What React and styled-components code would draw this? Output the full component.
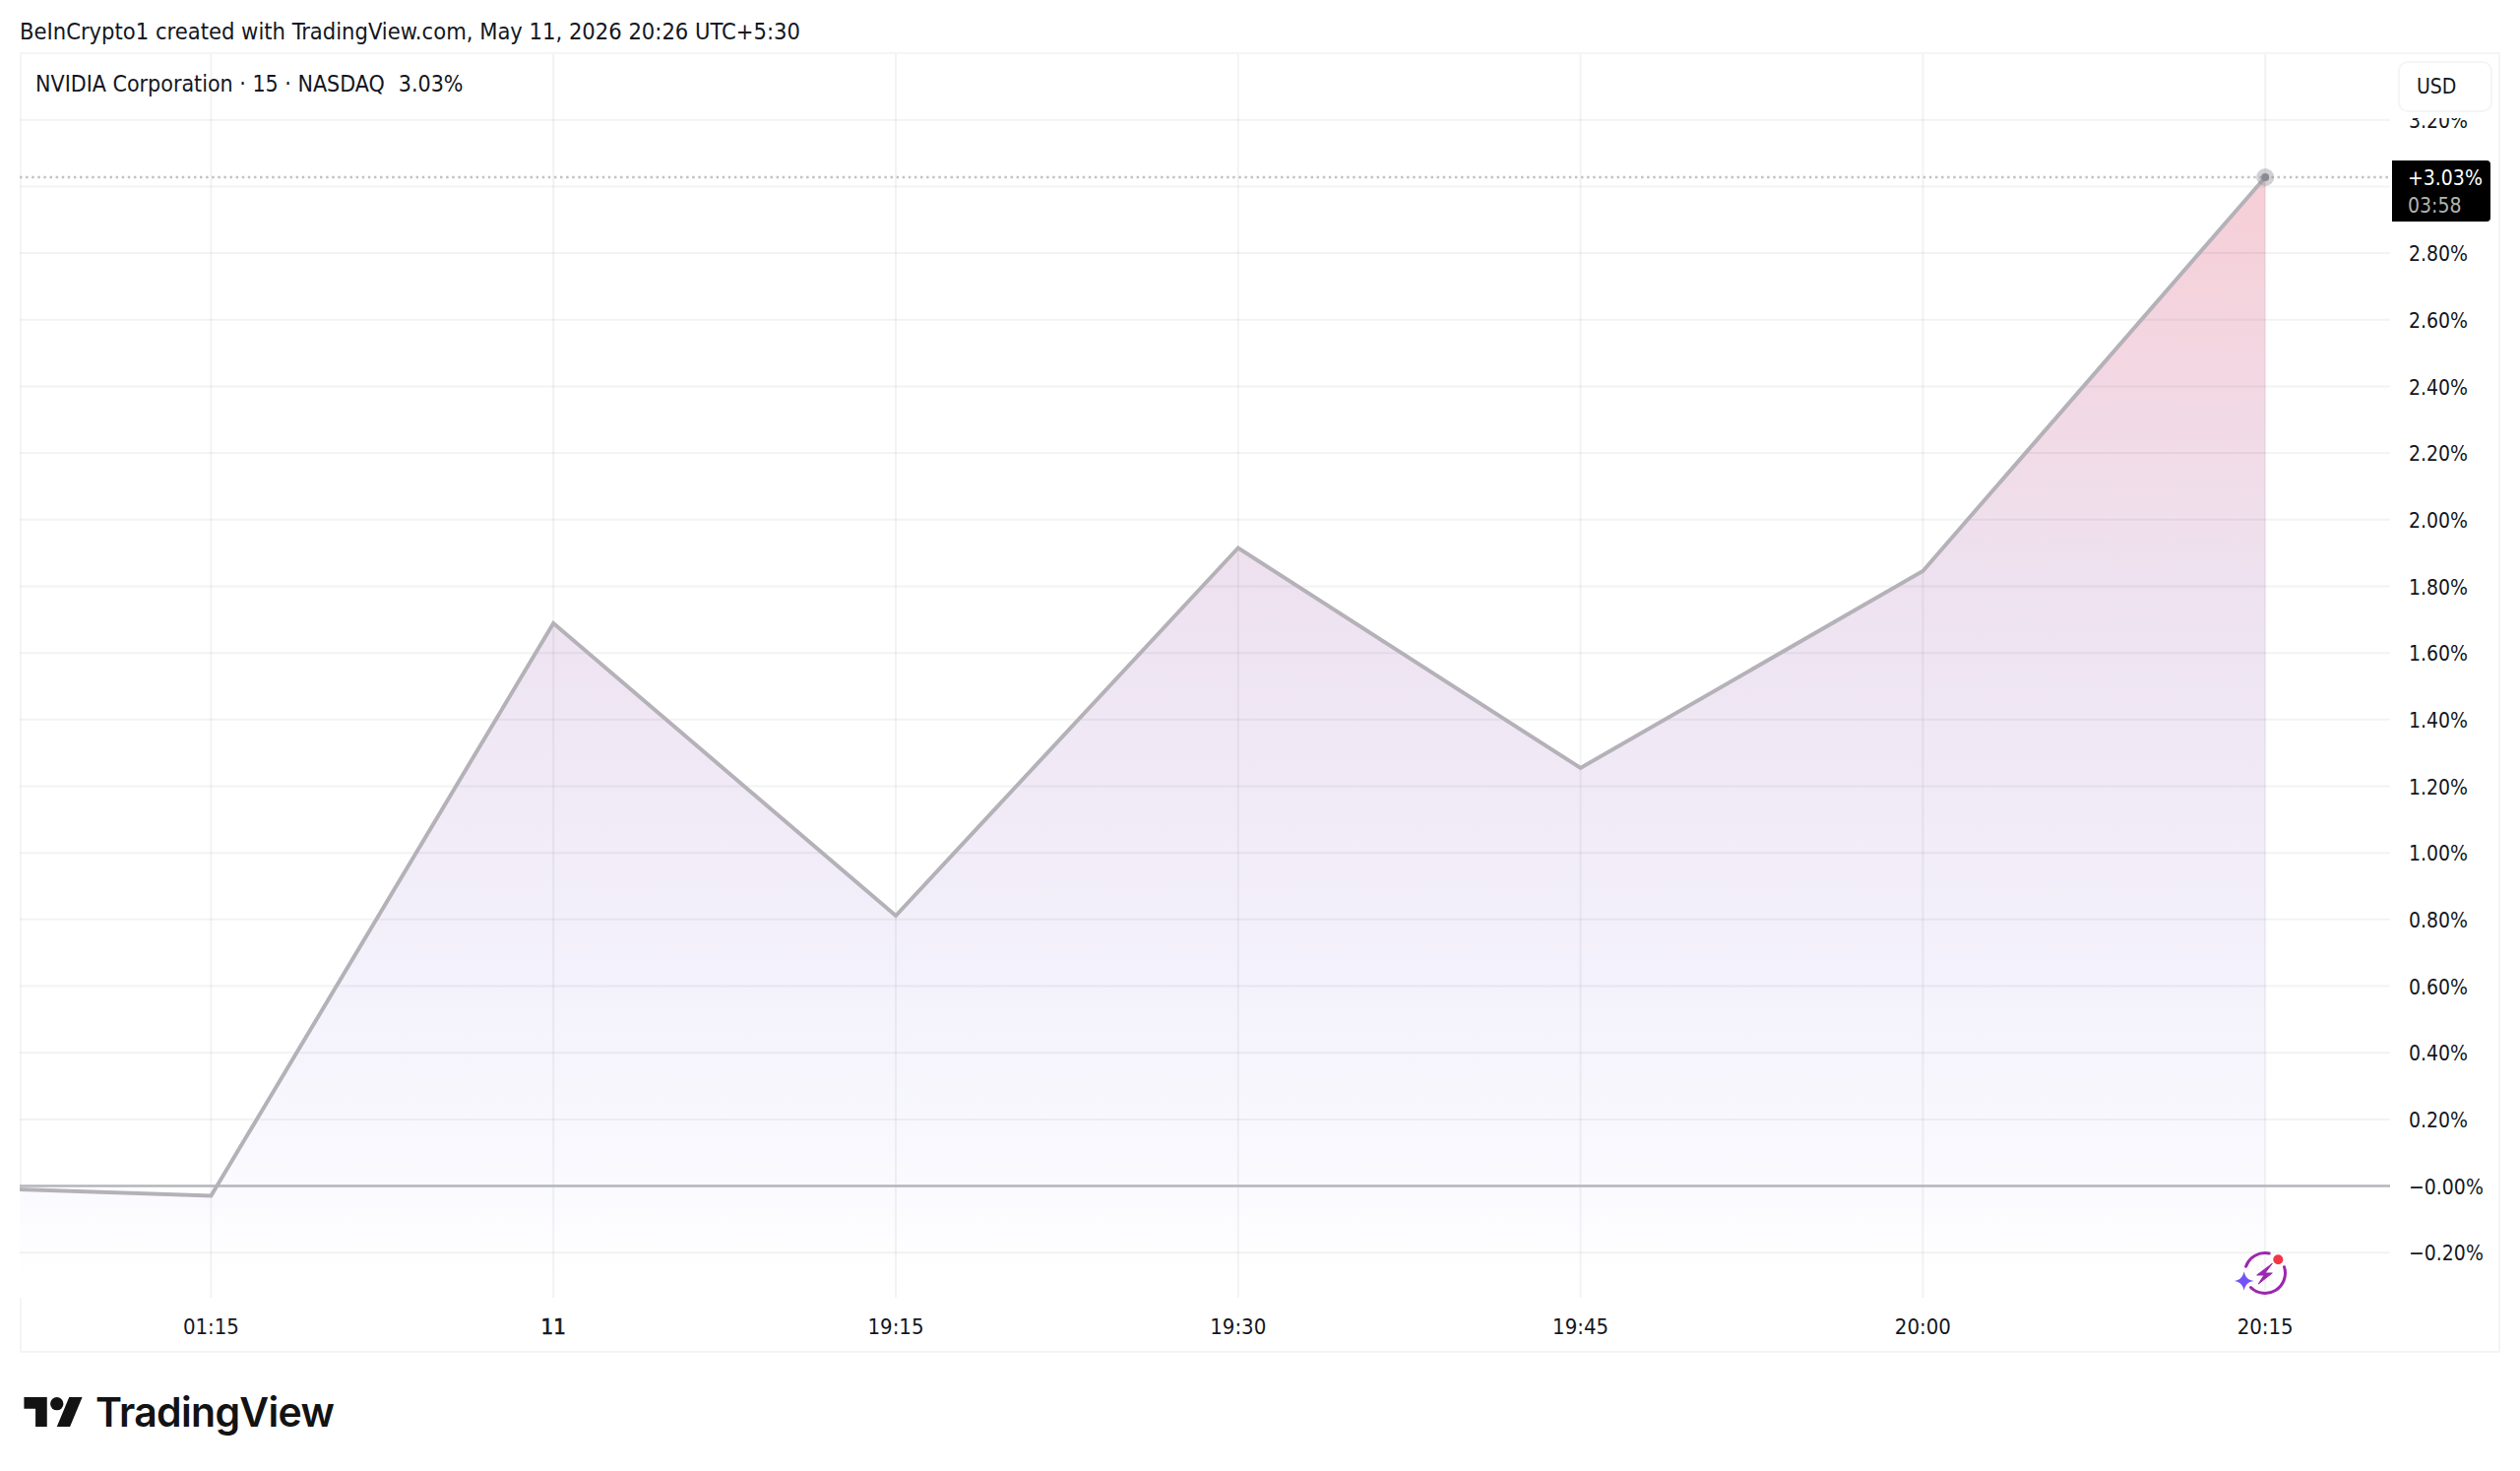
import styled, { createGlobalStyle } from "styled-components"

const GlobalStyle = createGlobalStyle`
    html, body {
        margin: 0;
        background: #fff;
    }
    body {
        font-family: "DejaVu Sans Condensed", "DejaVu Sans", sans-serif;
        font-stretch: condensed;
        color: #131722;
    }
`

const Page = styled.div`
    width: 2560px;
    height: 1494px;
    padding: 0 20px;
    box-sizing: border-box;
    overflow: hidden;
`

const Caption = styled.div`
    height: 53px;
    padding-top: 18px;
    box-sizing: border-box;
    font-size: 23.5px;
    line-height: 28px;
    white-space: nowrap;
`

const Frame = styled.div`
    position: relative;
    display: grid;
    grid-template-columns: 2406px 110px;
    grid-template-rows: 1263px 54px;
    border: 2px solid #f5f5f6;
`

const Plot = styled.div`
    margin-left: -2px;
    overflow: hidden;

    svg {
        display: block;
    }
`

const PriceAxis = styled.div`
    display: flex;
    flex-direction: column;
    padding: 34px 0 0 19px;
    overflow: hidden;
`

const PriceTick = styled.div`
    flex: 0 0 67.68px;
    display: flex;
    align-items: center;
    font-size: 21px;
    white-space: nowrap;
`

const TimeAxis = styled.div`
    display: flex;
    padding: 4px 0 0 18.5px;
`

const TimeTick = styled.div`
    flex: 0 0 347.8px;
    display: flex;
    align-items: center;
    justify-content: center;
    font-size: 22px;
    -webkit-text-stroke: ${(p) => (p.$strong ? "0.6px" : "0")};
`

const Legend = styled.div`
    position: absolute;
    left: 14px;
    top: 16px;
    font-size: 23px;
    line-height: 28px;
    white-space: nowrap;

    span {
        margin-left: 14px;
    }
`

const CurrencyButton = styled.div`
    position: absolute;
    right: 6px;
    top: 7px;
    width: 96px;
    height: 52px;
    box-sizing: border-box;
    display: flex;
    align-items: center;
    padding-left: 17px;
    font-size: 21px;
    background: #fff;
    border: 2px solid #f5f5f6;
    border-radius: 10px;
    box-shadow: 0 0 0 6px #fff;
`

const PriceBadge = styled.div`
    position: absolute;
    right: 8px;
    top: 108px;
    width: 100px;
    height: 62px;
    box-sizing: border-box;
    padding: 4px 0 0 16px;
    background: #000;
    color: #fff;
    border-radius: 0 4px 4px 0;
    font-size: 21px;
    line-height: 28px;
`

const Countdown = styled.div`
    color: #b2b2b2;
`

const SparkIcon = styled.svg`
    position: absolute;
    left: 2246px;
    top: 1210px;
`

const Footer = styled.div`
    display: flex;
    align-items: center;
    gap: 13px;
    margin: 35px 0 0 4px;
`

const Wordmark = styled.div`
    font-family: Inter, "Liberation Sans", sans-serif;
    font-stretch: normal;
    font-size: 41px;
    line-height: 50px;
    font-weight: 600;
    letter-spacing: -0.7px;
    color: #131313;
`

// the 3.00% tick sits under the last-price badge, so it stays empty
const priceTicks = [
    "3.20%", "", "2.80%", "2.60%", "2.40%", "2.20%", "2.00%", "1.80%", "1.60%",
    "1.40%", "1.20%", "1.00%", "0.80%", "0.60%", "0.40%", "0.20%", "−0.00%", "−0.20%",
]
const timeTicks = ["01:15", "11", "19:15", "19:30", "19:45", "20:00", "20:15"]

const gridY = priceTicks.map((_, i) => 121.7 + i * 67.68)
const gridX = timeTicks.map((_, i) => 214.4 + i * 347.8)
const points = [
    [20, 1208], [214.4, 1214.5], [562.2, 633], [910, 930], [1257.8, 556.5],
    [1605.6, 780], [1953.4, 580], [2301.2, 180],
]
const linePath = points.map((p) => p.join(",")).join(" ")
const areaPath = `${linePath} 2301.2,1318 20,1318`

const Chart = () => (
    <svg width="2408" height="1263" viewBox="20 55 2408 1263">
        <defs>
            <linearGradient id="area" gradientUnits="userSpaceOnUse" x1="0" y1="180" x2="0" y2="1318">
                <stop offset="0" stopColor="#f6ced6" />
                <stop offset="0.37" stopColor="#eee2f0" />
                <stop offset="0.7" stopColor="#f3f1fb" />
                <stop offset="0.9" stopColor="#fafaff" />
                <stop offset="0.96" stopColor="#fefeff" />
                <stop offset="1" stopColor="#ffffff" />
            </linearGradient>
        </defs>
        <polygon points={areaPath} fill="url(#area)" />
        {gridY.map((y) => (
            <line key={y} x1="20" x2="2428" y1={y} y2={y} stroke="#2a2e39" strokeOpacity="0.06" strokeWidth="2" />
        ))}
        {gridX.map((x) => (
            <line key={x} x1={x} x2={x} y1="55" y2="1318" stroke="#2a2e39" strokeOpacity="0.06" strokeWidth="2" />
        ))}
        <line x1="20" x2="2428" y1="1204.5" y2="1204.5" stroke="#b4b6bc" strokeWidth="2.5" />
        <line x1="20" x2="2428" y1="180" y2="180" stroke="#c3c3c7" strokeWidth="2.5" strokeDasharray="2.5 3.6" />
        <polyline points={linePath} fill="none" stroke="#b5b1b8" strokeWidth="4" strokeLinejoin="miter" />
        <circle cx="2301.2" cy="180" r="9" fill="#8b8b92" fillOpacity="0.4" />
        <circle cx="2301.2" cy="180" r="4" fill="#8b8b92" />
    </svg>
)

const Spark = () => (
    <SparkIcon width="60" height="56" viewBox="0 0 60 56" fill="none">
        <path d="M13.6 21.3A20.5 20.5 0 0 1 37.2 8" stroke="#9c27b0" strokeWidth="3" strokeLinecap="round" />
        <path d="M52.5 21.7A20.5 20.5 0 0 1 18.5 42.5" stroke="#9c27b0" strokeWidth="3" strokeLinecap="round" />
        <path d="M40.3 18.3 24.7 30H32L26.3 39 40.3 28H33Z" fill="#9c27b0" stroke="#9c27b0" strokeWidth="1" strokeLinejoin="round" />
        <path d="M11.7 26.2C13 32 15.500 34.800 21.500 36C15.500 37.200 13 40 11.700 45.800C10.400 40 7.900 37.200 1.900 36C7.900 34.800 10.400 32 11.700 26.200Z" fill="#7353f6" />
        <circle cx="46.300" cy="14.300" r="5" fill="#f23645" />
    </SparkIcon>
)

const Logo = () => (
    <svg width="60" height="30" viewBox="0 4 35.500 18">
        <path d="M14 22H7V11H0V4h14v18zM28 22h-8l7.500-18h8L28 22z" fill="#131313" />
        <circle cx="20" cy="8" r="4" fill="#131313" />
    </svg>
)

const App = () => {
    return (
        <Page>
            <GlobalStyle />
            <Caption>BeInCrypto1 created with TradingView.com, May 11, 2026 20:26 UTC+5:30</Caption>
            <Frame>
                <Plot>
                    <Chart />
                </Plot>
                <PriceAxis>
                    {priceTicks.map((t, i) => (
                        <PriceTick key={i}>{t}</PriceTick>
                    ))}
                </PriceAxis>
                <TimeAxis>
                    {timeTicks.map((t) => (
                        <TimeTick key={t} $strong={t === "11"}>{t}</TimeTick>
                    ))}
                </TimeAxis>
                <div />
                <Legend>NVIDIA Corporation · 15 · NASDAQ<span>3.03%</span></Legend>
                <CurrencyButton>USD</CurrencyButton>
                <PriceBadge>
                    +3.03%
                    <Countdown>03:58</Countdown>
                </PriceBadge>
                <Spark />
            </Frame>
            <Footer>
                <Logo />
                <Wordmark>TradingView</Wordmark>
            </Footer>
        </Page>
    )
}

export default App
